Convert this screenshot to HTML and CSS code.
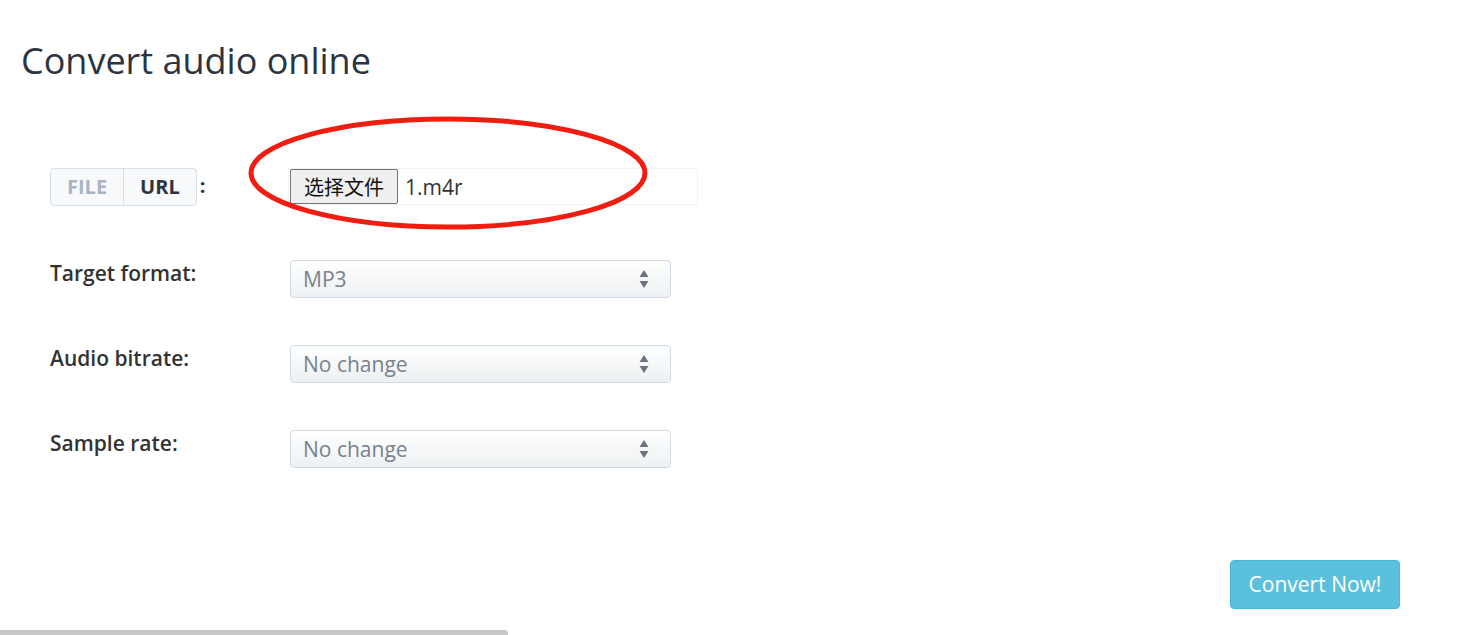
FILE: index.html
```html
<!DOCTYPE html>
<html lang="en">
<head>
    <meta charset="UTF-8">
    <title>Convert audio online</title>
    <link rel="stylesheet" href="styles.css">
</head>
<body>

<div class="page">
    <h1 class="title">Convert audio online</h1>

    <form class="convert-form">
        <!-- Source row -->
        <div class="form-row source-row">
            <div class="source-label">
                <div class="source-toggle">
                    <span class="toggle-item inactive">FILE</span>
                    <span class="toggle-item active">URL</span>
                </div>
                <span class="colon">:</span>
            </div>
            <div class="file-box">
                <span class="file-button">选择文件</span>
                <span class="file-name">1.m4r</span>
                <svg class="mark" width="410" height="120" viewBox="0 0 410 120">
                    <ellipse cx="203" cy="60" rx="197" ry="54" fill="none" stroke="#f21d11" stroke-width="5"/>
                </svg>
            </div>
        </div>

        <div class="form-row">
            <label class="field-label">Target format:</label>
            <div class="select-box">
                <span>MP3</span>
                <svg class="arrows" width="10" height="20" viewBox="0 0 10 20">
                    <path d="M5 1 L9.5 8 L0.5 8 Z" fill="#6a7480"/>
                    <path d="M5 19 L9.5 12 L0.5 12 Z" fill="#6a7480"/>
                </svg>
            </div>
        </div>

        <div class="form-row">
            <label class="field-label">Audio bitrate:</label>
            <div class="select-box">
                <span>No change</span>
                <svg class="arrows" width="10" height="20" viewBox="0 0 10 20">
                    <path d="M5 1 L9.5 8 L0.5 8 Z" fill="#6a7480"/>
                    <path d="M5 19 L9.5 12 L0.5 12 Z" fill="#6a7480"/>
                </svg>
            </div>
        </div>

        <div class="form-row">
            <label class="field-label">Sample rate:</label>
            <div class="select-box">
                <span>No change</span>
                <svg class="arrows" width="10" height="20" viewBox="0 0 10 20">
                    <path d="M5 1 L9.5 8 L0.5 8 Z" fill="#6a7480"/>
                    <path d="M5 19 L9.5 12 L0.5 12 Z" fill="#6a7480"/>
                </svg>
            </div>
        </div>

        <div class="form-actions">
            <span class="convert-button">Convert Now!</span>
        </div>
    </form>
</div>

<!-- horizontal scrollbar thumb -->
<div class="scroll-thumb"></div>

</body>
</html>
```

FILE: styles.css
```css
body {
    margin: 0;
    font-family: 'Open Sans', 'Noto Sans CJK SC', sans-serif;
    background-color: white;
    color: #333;
    overflow: hidden;
}

.page {
    padding: 38px 57px 0 21px;
}

.title {
    margin: 0;
    font-size: 36px;
    font-weight: 400;
    line-height: 46px;
    color: #2b3440;
}

/* Form */
.convert-form {
    padding: 84px 0 0 29px;
}

.form-row {
    display: grid;
    grid-template-columns: 240px 410px;
    align-items: start;
    height: 85px;
}

.form-row.source-row {
    height: 92px;
}

.source-label {
    display: flex;
    align-items: center;
    gap: 3px;
}

.source-toggle {
    display: flex;
    border: 1px solid #d6dee7;
    border-radius: 4px;
    background-color: #f8f9fb;
    overflow: hidden;
}

.toggle-item {
    font-size: 20px;
    font-weight: 700;
    line-height: 36px;
    padding: 0 16px;
}

.toggle-item.inactive {
    color: #a9b5c6;
    border-right: 1px solid #d6dee7;
}

.toggle-item.active {
    color: #2b3440;
}

.colon {
    font-weight: 700;
    font-size: 20px;
    color: #2b3440;
    margin-top: -4px;
}

.file-box {
    position: relative;
    display: flex;
    align-items: center;
    gap: 7px;
    height: 35px;
    margin: 0 2px 0 -2px;
    border: 1px solid #f2f2f2;
    padding-left: 1px;
}

.file-button {
    font-family: 'Noto Sans CJK SC', sans-serif;
    font-size: 20px;
    line-height: 33px;
    color: #111;
    background-color: #efefef;
    border: 1px solid #767676;
    border-radius: 2px;
    padding: 0 13px;
    margin-top: -1px;
}

.file-name {
    font-size: 21px;
    color: #333;
}

.mark {
    position: absolute;
    left: -44px;
    top: -56px;
}

.field-label {
    font-size: 21px;
    font-weight: 600;
    color: #333;
    line-height: 26px;
}

.select-box {
    display: flex;
    align-items: center;
    justify-content: space-between;
    width: 346px;
    height: 36px;
    padding: 0 21px 0 12px;
    border: 1px solid #d0dae4;
    border-radius: 4px;
    background: linear-gradient(to bottom, #ffffff, #edf0f2);
    font-size: 21px;
    color: #77828d;
}

.form-actions {
    display: flex;
    justify-content: flex-end;
    padding-top: 45px;
}

.convert-button {
    display: inline-block;
    width: 168px;
    height: 47px;
    line-height: 47px;
    text-align: center;
    font-size: 21px;
    color: white;
    background-color: #5bc0de;
    border: 1px solid #46b8da;
    border-radius: 4px;
}

.scroll-thumb {
    position: fixed;
    left: 0;
    bottom: 0;
    width: 508px;
    height: 5px;
    background-color: #c8c8c8;
    border-top-right-radius: 3px;
}
```
